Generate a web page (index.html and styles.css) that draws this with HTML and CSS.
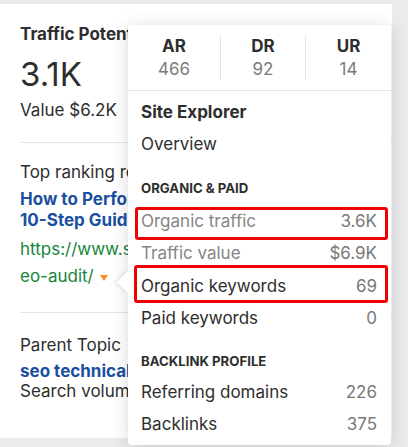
FILE: index.html
```
<!DOCTYPE html>
<html lang="en">
<head>
<meta charset="utf-8">
<title>Keyword overview</title>
<link rel="stylesheet" href="styles.css">
</head>
<body>
<main class="card">
  <section class="stat">
    <div class="stat-label">Traffic Potential</div>
    <div class="stat-big">3.1K</div>
    <div class="stat-sub">Value $6.2K</div>
  </section>
  <hr class="divider">
  <section class="result">
    <div class="result-label">Top ranking result</div>
    <a class="result-title" href="#"><span class="line">How to Perform a Technical SEO Audit: A</span><span class="line">10-Step Guide</span></a>
    <div class="result-url"><span class="line">https://www.semrush.com/blog/technical-s</span><span class="line">eo-audit/ <span class="caret"></span></span></div>
  </section>
  <hr class="divider divider-b">
  <section class="topic">
    <div class="topic-label">Parent Topic</div>
    <a class="topic-link" href="#">seo technical audit</a>
    <div class="topic-vol">Search volume 1.2K</div>
  </section>
</main>

<div class="popup">
  <span class="pointer"></span>
  <div class="metrics">
    <div class="metric"><div class="m-name">AR</div><div class="m-val">466</div></div>
    <div class="metric"><div class="m-name">DR</div><div class="m-val">92</div></div>
    <div class="metric"><div class="m-name">UR</div><div class="m-val">14</div></div>
  </div>
  <nav class="menu">
    <div class="row row-title">Site Explorer</div>
    <div class="row">Overview</div>
    <div class="group group-first">ORGANIC &amp; PAID</div>
    <div class="row row-muted mark-a"><span>Organic traffic</span><span class="val">3.6K</span></div>
    <div class="row row-muted"><span>Traffic value</span><span class="val">$6.9K</span></div>
    <div class="row mark-b"><span>Organic keywords</span><span class="val">69</span></div>
    <div class="row"><span>Paid keywords</span><span class="val">0</span></div>
    <div class="group group-second">BACKLINK PROFILE</div>
    <div class="row"><span>Referring domains</span><span class="val">226</span></div>
    <div class="row"><span>Backlinks</span><span class="val">375</span></div>
  </nav>
</div>
</body>
</html>
```
FILE: styles.css
```
* { box-sizing: border-box; }

html, body {
  margin: 0;
  padding: 0;
  height: 100%;
  overflow: hidden;
}

body {
  background: #ebebed;
  font-family: Inter, "Noto Sans", sans-serif;
  font-size: 17px;
  color: #2e2e2e;
  position: relative;
}

.card {
  margin-top: 4px;
  width: 392px;
  height: 434px;
  background: #fff;
  padding: 20px 0 0 20px;
  overflow: hidden;
}

.line { display: block; white-space: nowrap; }

.stat-label {
  font-weight: 700;
  line-height: 20px;
  white-space: nowrap;
}
.stat-big {
  font-size: 33px;
  line-height: 40px;
  margin-top: 10px;
}
.stat-sub {
  line-height: 20px;
  margin-top: 6px;
}

.divider {
  border: 0;
  border-top: 1px solid #e3e3e3;
  margin: 22px 0 0 0;
  height: 0;
}
.divider-b { margin-top: 22px; }

.result { padding-top: 19px; }
.result-label { line-height: 20px; white-space: nowrap; }
.result-title {
  display: block;
  margin-top: 7px;
  font-weight: 700;
  color: #1b4fa0;
  text-decoration: none;
  line-height: 21px;
}
.result-url {
  margin-top: 5px;
  color: #17843a;
  line-height: 27px;
}
.caret {
  display: inline-block;
  width: 0;
  height: 0;
  border-left: 4.5px solid transparent;
  border-right: 4.5px solid transparent;
  border-top: 6px solid #f7901e;
  margin-left: 1px;
  vertical-align: 1px;
}

.topic { padding-top: 22px; }
.topic-label { line-height: 20px; white-space: nowrap; }
.topic-link {
  display: block;
  margin-top: 6px;
  font-weight: 700;
  color: #1b4fa0;
  text-decoration: none;
  line-height: 20px;
  white-space: nowrap;
}
.topic-vol { line-height: 20px; white-space: nowrap; }

/* popup overlay */
.popup {
  position: absolute;
  left: 128px;
  top: 25px;
  width: 263px;
  background: #fff;
  border-radius: 4px;
  box-shadow: 0 2px 18px rgba(0, 0, 0, 0.14), 0 0 1px rgba(0, 0, 0, 0.12);
}

.pointer {
  position: absolute;
  left: -8px;
  top: 249px;
  width: 16px;
  height: 16px;
  background: #fff;
  transform: rotate(45deg);
  box-shadow: -2px 2px 4px rgba(0, 0, 0, 0.08);
}

.metrics {
  position: relative;
  display: grid;
  grid-template-columns: 92px 85px 1fr;
  padding: 10px 0;
  border-bottom: 1px solid #e6e6e6;
  background: #fff;
  border-radius: 4px 4px 0 0;
}
.metric {
  height: 45px;
  padding-top: 1px;
  text-align: center;
}
.metric + .metric { border-left: 1px solid #e6e6e6; }
.m-name { font-weight: 700; line-height: 20px; }
.m-val { color: #7b7b7b; line-height: 20px; margin-top: 3px; }

.menu {
  position: relative;
  padding: 4.5px 0 4px 0;
  background: #fff;
  border-radius: 0 0 4px 4px;
}

.row {
  position: relative;
  display: flex;
  justify-content: space-between;
  height: 32.5px;
  line-height: 32.5px;
  padding: 0 14px 0 13px;
  white-space: nowrap;
}
.row-title { font-weight: 700; }
.row-muted { color: #858585; }
.val { color: #787878; }

.group {
  font-size: 13.2px;
  font-weight: 700;
  line-height: 20px;
  padding-left: 13px;
  color: #2e2e2e;
}
.group-first { margin: 17px 0 7px 0; }
.group-second { margin: 16px 0 5px 0; }

.mark-a::after,
.mark-b::after {
  content: "";
  position: absolute;
  border: 3px solid #f00000;
  border-radius: 3px;
}
.mark-a::after { left: 7px; right: 3px; top: 2.5px; bottom: -2.6px; }
.mark-b::after { left: 6px; right: 3px; top: -5px; bottom: -1px; }
```
